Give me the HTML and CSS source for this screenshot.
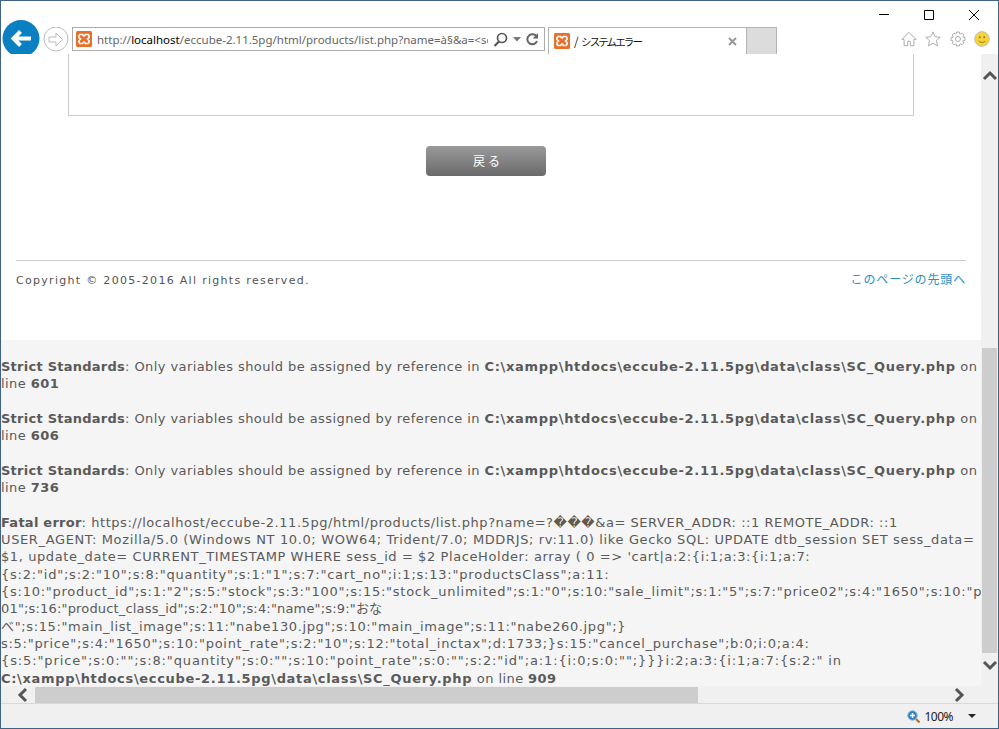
FILE: index.html
```html
<!DOCTYPE html>
<html lang="ja">
<head>
<meta charset="utf-8">
<title>/ システムエラー</title>
<link rel="stylesheet" href="styles.css">
</head>
<body>
<div class="window">
  <header class="chrome">
    <div class="caption">
      <svg class="cap" width="12" height="12" viewBox="0 0 12 12"><path d="M1 5.500h10" stroke="#000" fill="none"/></svg>
      <svg class="cap" width="12" height="12" viewBox="0 0 12 12"><path d="M1.500 1.500h9v9h-9z" stroke="#000" fill="none"/></svg>
      <svg class="cap" width="12" height="12" viewBox="0 0 12 12"><path d="M1 1l10 10M11 1L1 11" stroke="#000" fill="none"/></svg>
    </div>
    <svg class="back" width="39" height="34" viewBox="0 0 39 34"><circle cx="20" cy="18.500" r="18.500" fill="#0a7fc2"/><path d="M30 18.500H13M19.500 11.500l-7 7 7 7" stroke="#fff" stroke-width="4" fill="none"/></svg>
    <svg class="forward" width="26" height="27" viewBox="0 0 26 27"><circle cx="13" cy="12" r="12" fill="#fff" stroke="#bbb"/><path d="M6 10h7V6l6.500 6.500L13 19v-4H6z" fill="none" stroke="#bbb"/></svg>
    <div class="address">
      <svg class="fav" width="16" height="16" viewBox="0 0 16 16"><rect width="16" height="16" rx="1.500" fill="#e8702a"/><path d="M4 3.500h2.500L8 5l1.500-1.500H12l1 1v2L11.500 8 13 9.500v2l-1 1H9.500L8 11l-1.500 1.500H4l-1-1v-2L4.500 8 3 6.500v-2z" fill="none" stroke="#fff" stroke-width="1.600"/></svg>
      <span class="url">http://<b>localhost</b>/eccube-2.11.5pg/html/products/list.php?name=à§&amp;a=&lt;script</span>
      <svg class="addr-ico" width="15" height="15" viewBox="0 0 15 15"><circle cx="9" cy="6" r="4.500" fill="none" stroke="#555" stroke-width="1.700"/><path d="M6 9.500L1.500 14" stroke="#555" stroke-width="2.200"/></svg>
      <svg class="addr-ico" width="8" height="5" viewBox="0 0 8 5"><path d="M0 0h8L4 4.500z" fill="#777"/></svg>
      <svg class="addr-ico" width="13" height="14" viewBox="0 0 13 14"><path d="M10.800 5A5 5 0 1 0 11 9" fill="none" stroke="#666" stroke-width="2"/><path d="M12 1v5.500H6.800z" fill="#666"/></svg>
    </div>
    <div class="tab">
      <svg class="fav" width="16" height="16" viewBox="0 0 16 16"><rect width="16" height="16" rx="1.500" fill="#e8702a"/><path d="M4 3.500h2.500L8 5l1.500-1.500H12l1 1v2L11.500 8 13 9.500v2l-1 1H9.500L8 11l-1.500 1.500H4l-1-1v-2L4.500 8 3 6.500v-2z" fill="none" stroke="#fff" stroke-width="1.600"/></svg>
      <span class="tab-title">/ <span class="kana">システムエラー</span></span>
      <svg class="tab-x" width="9" height="9" viewBox="0 0 9 9"><path d="M1 1l7 7M8 1L1 8" stroke="#999" stroke-width="2"/></svg>
    </div>
    <div class="newtab"></div>
    <div class="tools">
      <svg width="16" height="16" viewBox="0 0 18 18"><path d="M1 9.500L9 1.500l8 8h-2.500v7h-4v-5h-3v5h-4v-7z" fill="#fff" stroke="#aaa" stroke-width="1.100"/></svg>
      <svg width="16" height="16" viewBox="0 0 18 18"><path d="M9 1l2.400 5.400 5.800.6-4.300 3.900 1.200 5.800L9 13.800l-5.100 2.900 1.200-5.800L.8 7l5.800-.6z" fill="#fff" stroke="#aaa" stroke-width="1.100"/></svg>
      <svg width="16" height="16" viewBox="-9 -9 18 18"><circle r="2.800" fill="none" stroke="#aaa" stroke-width="1.100"/><polygon points="5.640,-2.050 7.850,-1.530 7.850,1.530 5.640,2.050 5.440,2.540 6.630,4.470 4.470,6.630 2.540,5.440 2.050,5.640 1.530,7.850 -1.530,7.850 -2.050,5.640 -2.540,5.440 -4.470,6.630 -6.630,4.470 -5.440,2.540 -5.640,2.050 -7.850,1.530 -7.850,-1.530 -5.640,-2.050 -5.440,-2.540 -6.630,-4.470 -4.470,-6.630 -2.540,-5.440 -2.050,-5.640 -1.530,-7.850 1.530,-7.850 2.050,-5.640 2.540,-5.440 4.470,-6.630 6.630,-4.470 5.440,-2.540" fill="none" stroke="#aaa" stroke-width="1.100"/></svg>
      <svg width="16" height="16" viewBox="0 0 18 18"><circle cx="9" cy="9" r="8.300" fill="#f6d33c" stroke="#bbb"/><circle cx="6.500" cy="7" r="1.100" fill="#8a7a20"/><circle cx="11.500" cy="7" r="1.100" fill="#8a7a20"/><path d="M5 11c2 2.500 6 2.500 8 0" fill="none" stroke="#8a7a20"/></svg>
    </div>
  </header>

  <div class="view">
    <main class="page">
      <div class="content">
        <div class="box"></div>
        <div class="actions"><a class="btn">戻る</a></div>
        <footer class="foot">
          <p class="copy">Copyright © 2005-2016 All rights reserved.</p>
          <a class="top-link">このページの先頭へ</a>
        </footer>
      </div>
      <div class="errors"><br>
<b class="label">Strict Standards</b>: Only variables should be assigned by reference in <b class="path">C:\xampp\htdocs\eccube-2.11.5pg\data\class\SC_Query.php</b> on<br>line <b>601</b><br><br>
<b class="label">Strict Standards</b>: Only variables should be assigned by reference in <b class="path">C:\xampp\htdocs\eccube-2.11.5pg\data\class\SC_Query.php</b> on<br>line <b>606</b><br><br>
<b class="label">Strict Standards</b>: Only variables should be assigned by reference in <b class="path">C:\xampp\htdocs\eccube-2.11.5pg\data\class\SC_Query.php</b> on<br>line <b>736</b><br><br>
<span class="f1"><b class="label">Fatal error</b>: https://localhost/eccube-2.11.5pg/html/products/list.php?name=?���&amp;a= SERVER_ADDR: ::1 REMOTE_ADDR: ::1</span><br>
<span class="f2">USER_AGENT: Mozilla/5.0 (Windows NT 10.0; WOW64; Trident/7.0; MDDRJS; rv:11.0) like Gecko SQL: UPDATE dtb_session SET sess_data=</span><br>
<span class="f3">$1, update_date= CURRENT_TIMESTAMP WHERE sess_id = $2 PlaceHolder: array ( 0 =&gt; 'cart|a:2:{i:1;a:3:{i:1;a:7:</span><br>
<span class="f4">{s:2:"id";s:2:"10";s:8:"quantity";s:1:"1";s:7:"cart_no";i:1;s:13:"productsClass";a:11:</span><br>
<span class="f5">{s:10:"product_id";s:1:"2";s:5:"stock";s:3:"100";s:15:"stock_unlimited";s:1:"0";s:10:"sale_limit";s:1:"5";s:7:"price02";s:4:"1650";s:10:"price01";s:4:"1800";</span><br>
<span class="f6">01";s:16:"product_class_id";s:2:"10";s:4:"name";s:9:"おな</span><br>
<span class="f7">べ";s:15:"main_list_image";s:11:"nabe130.jpg";s:10:"main_image";s:11:"nabe260.jpg";}</span><br>
<span class="f8">s:5:"price";s:4:"1650";s:10:"point_rate";s:2:"10";s:12:"total_inctax";d:1733;}s:15:"cancel_purchase";b:0;i:0;a:4:</span><br>
<span class="f9">{s:5:"price";s:0:"";s:8:"quantity";s:0:"";s:10:"point_rate";s:0:"";s:2:"id";a:1:{i:0;s:0:"";}}}i:2;a:3:{i:1;a:7:{s:2:" in</span><br>
<b class="path">C:\xampp\htdocs\eccube-2.11.5pg\data\class\SC_Query.php</b> on line <b>909</b></div>
    </main>
    <div class="vscroll">
      <svg class="arrow" width="16" height="12" viewBox="0 0 16 12"><path d="M2 10l6-6 6 6" fill="none" stroke="#555" stroke-width="3"/></svg>
      <div class="vthumb"></div>
      <svg class="arrow" width="16" height="12" viewBox="0 0 16 12"><path d="M2 2l6 6 6-6" fill="none" stroke="#555" stroke-width="3"/></svg>
    </div>
  </div>

  <div class="hscroll">
    <svg class="harrow" width="12" height="16" viewBox="0 0 12 16"><path d="M9 2L3 8l6 6" fill="none" stroke="#555" stroke-width="3"/></svg>
    <div class="hthumb"></div>
    <svg class="harrow right" width="12" height="16" viewBox="0 0 12 16"><path d="M3 2l6 6-6 6" fill="none" stroke="#555" stroke-width="3"/></svg>
  </div>

  <div class="status">
    <svg width="13" height="13" viewBox="0 0 13 13"><circle cx="5.500" cy="5.500" r="4.700" fill="#2f7fc4" stroke="#8fb4d8"/><path d="M3 5.500h5M5.500 3v5" stroke="#fff" stroke-width="1.500"/><path d="M9 9l3.500 3.500" stroke="#a5702e" stroke-width="2"/></svg>
    <span class="zoom">100%</span>
    <svg class="zoom-arrow" width="8" height="4" viewBox="0 0 8 4"><path d="M0 0h8L4 4z" fill="#222"/></svg>
  </div>
</div>
</body>
</html>
```
FILE: styles.css
```css
* { box-sizing: border-box; }
html, body { margin: 0; height: 100%; overflow: hidden; }
.window {
  width: 999px; height: 729px;
  display: flex; flex-direction: column;
  border: 1px solid #3e6387;
  background: #fff;
  font-family: "DejaVu Sans", Verdana, sans-serif;
  overflow: hidden;
}
.chrome {
  position: relative;
  flex: none; height: 53px;
  display: flex; align-items: flex-end;
  background: #fff;
  font-family: "Noto Sans", "Noto Sans CJK JP", sans-serif;
  overflow: hidden;
}
.caption { position: absolute; top: 8px; right: 18px; display: flex; gap: 33px; }
.back { flex: none; }
.forward { flex: none; margin-left: 3px; }
.address {
  flex: none; width: 473px; height: 24px; margin: 0 0 3px 3px;
  display: flex; align-items: center;
  border: 1px solid #ababab;
  padding: 0 5px 0 3px;
}
.fav { flex: none; }
.url {
  flex: 1; min-width: 0; margin-left: 5px;
  font-size: 11.500px; color: #666; white-space: nowrap; overflow: hidden;
}
.url b { font-weight: 400; color: #000; }
.addr-ico { flex: none; margin-left: 5px; }
.tab {
  flex: none; width: 199px; height: 27px; margin-left: 3px;
  display: flex; align-items: center;
  border: 1px solid #b4b4b4; border-bottom: 0;
  padding: 0 9px 0 5px;
}
.tab-title { flex: 1; margin-left: 4px; font-size: 11.500px; color: #111; white-space: nowrap; font-family: "Noto Sans CJK JP", sans-serif; }
.kana { font-size: 10.500px; letter-spacing: -1.900px; }
.tab-x { flex: none; }
.newtab { flex: none; width: 30px; height: 27px; background: #dcdcdc; border: 1px solid #b4b4b4; border-width: 1px 1px 0 0; }
.tools { margin-left: auto; margin-right: 8px; margin-bottom: 7px; display: flex; gap: 8.300px; }

.view { flex: none; height: 632px; display: flex; }
.page { flex: none; width: 980px; overflow: hidden; background: #fff; color: #555; }
.content { height: 286px; }
.box { height: 62px; margin: 0 67px; border: 1px solid #ccc; border-top: 0; }
.actions { display: flex; justify-content: center; padding: 30px 10px 0 0; }
.btn {
  width: 120px; height: 30px; display: flex; align-items: center; justify-content: center;
  padding: 0 0 2px 4px;
  border-radius: 4px; background: linear-gradient(#9a9a9a, #6a6a6a);
  color: #fff; font-size: 12px; letter-spacing: 3px;
  font-family: "Noto Sans CJK JP", sans-serif;
}
.foot {
  margin: 84px 15px 0 15px; padding-top: 9px;
  display: flex; justify-content: space-between; align-items: flex-start;
  border-top: 1px solid #ccc;
}
.copy { margin: 4px 0 0; font-size: 11px; letter-spacing: 1.300px; color: #555; }
.top-link { color: #2a8fc4; font-size: 12px; letter-spacing: .85px; font-family: "Noto Sans CJK JP", sans-serif; }
.errors {
  background: #f5f5f5; height: 347px; padding-top: .5px; white-space: nowrap;
  font-size: 13px; line-height: 17.330px; color: #5a5a5a; letter-spacing: .42px;
  font-family: "DejaVu Sans", "Noto Sans CJK JP", sans-serif;
}
.label { letter-spacing: .25px; }
.path { letter-spacing: .68px; }
.f1 { letter-spacing: .55px; }
.f1 .label { letter-spacing: .25px; }
.f2 { letter-spacing: .63px; }
.f3 { letter-spacing: .59px; }
.f4 { letter-spacing: .78px; }
.f5 { letter-spacing: .74px; }
.f6 { letter-spacing: .17px; }
.f7 { letter-spacing: .63px; }
.f8 { letter-spacing: .72px; }
.f9 { letter-spacing: .88px; }
.vscroll {
  flex: 1; background: #f0f0f0; display: flex; flex-direction: column; align-items: center;
  padding-top: 15px;
}
.arrow { flex: none; }
.vthumb { flex: none; width: 15px; height: 305px; margin: 267px 0 7px; background: #cdcdcd; }
.hscroll { flex: none; height: 18px; display: flex; align-items: center; background: #f0f0f0; border-bottom: 1px solid #d9d9d9; }
.harrow { flex: none; margin-left: 16px; }
.hthumb { flex: none; width: 663px; height: 16px; margin-left: 6px; background: #cdcdcd; }
.harrow.right { margin-left: 255px; }
.status {
  flex: none; height: 24px; display: flex; align-items: center; justify-content: flex-end;
  background: #f0f0f0; padding-right: 22px;
  font-family: "Noto Sans", sans-serif; font-size: 12px; color: #222;
}
.zoom { margin-left: 4px; letter-spacing: -.5px; }
.zoom-arrow { margin-left: 15px; }
```
